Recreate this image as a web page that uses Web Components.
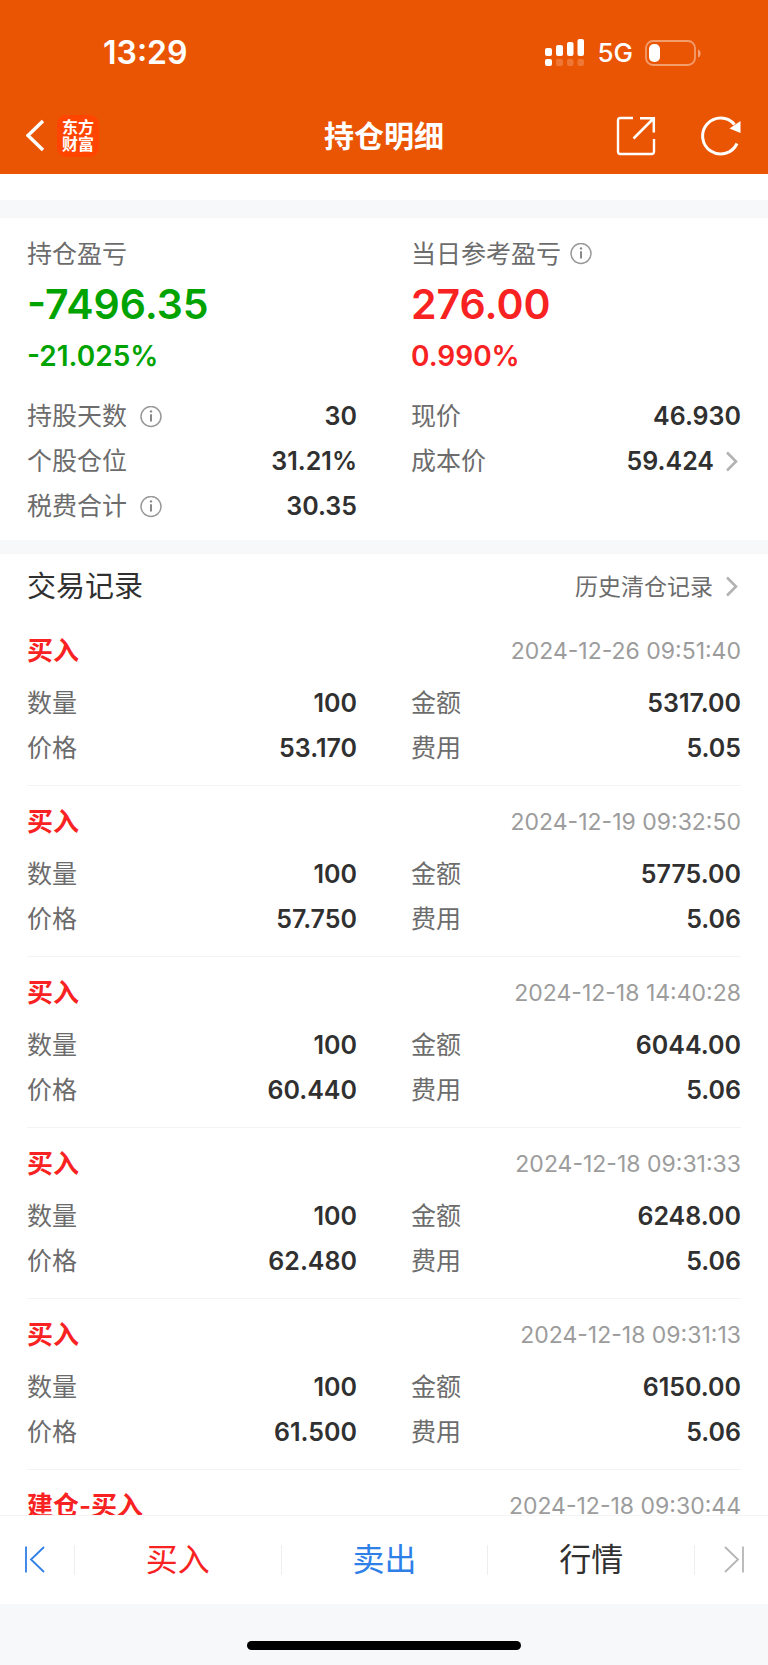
<!DOCTYPE html>
<html lang="zh-CN">
<head>
<meta charset="utf-8">
<meta name="viewport" content="width=device-width, initial-scale=1">
<title>持仓明细</title>
<style>
    :root{
        --brand: #ea5504;
        --red: #f82222;
        --green: #00a300;
        --blue: #2e7fe8;
        --text: #303030;
        --label: #6c6c6c;
        --muted: #9c9c9c;
        --strip: #f7f8fa;
        --line: #f4f4f4;
    }
    body{
        margin: 0;
        background: white;
        color: var(--text);
        font-family: Inter, "Noto Sans CJK SC", sans-serif;
    }
</style>
</head>
<body>
<position-page>
    <status-bar slot="header" time="13:29" network="5G"></status-bar>
    <nav-bar slot="header">持仓明细</nav-bar>

    <page-section gap="wide">
        <two-columns>
            <profit-figure trend="down" amount="-7496.35" percent="-21.025%">持仓盈亏</profit-figure>
            <profit-figure trend="up" amount="276.00" percent="0.990%" info>当日参考盈亏</profit-figure>
        </two-columns>
        <two-columns>
            <value-row value="30" info>持股天数</value-row>
            <value-row value="46.930">现价</value-row>
            <value-row value="31.21%">个股仓位</value-row>
            <value-row value="59.424" href="#cost">成本价</value-row>
            <value-row value="30.35" info>税费合计</value-row>
        </two-columns>
    </page-section>

    <page-section>
        <section-heading link="历史清仓记录" href="#history">交易记录</section-heading>
        <trade-record time="2024-12-26 09:51:40" count="100" amount="5317.00" price="53.170" fee="5.05">买入</trade-record>
        <trade-record time="2024-12-19 09:32:50" count="100" amount="5775.00" price="57.750" fee="5.06">买入</trade-record>
        <trade-record time="2024-12-18 14:40:28" count="100" amount="6044.00" price="60.440" fee="5.06">买入</trade-record>
        <trade-record time="2024-12-18 09:31:33" count="100" amount="6248.00" price="62.480" fee="5.06">买入</trade-record>
        <trade-record time="2024-12-18 09:31:13" count="100" amount="6150.00" price="61.500" fee="5.06">买入</trade-record>
        <trade-record time="2024-12-18 09:30:44">建仓-买入</trade-record>
    </page-section>

    <action-bar slot="footer">
        <button slot="action" class="buy">买入</button>
        <button slot="action" class="sell">卖出</button>
        <button slot="action">行情</button>
    </action-bar>
</position-page>

<script>
const INFO_ICON = `
    <svg class="info" width="22" height="22" viewBox="0 0 22 22" fill="none" aria-hidden="true">
        <circle cx="11" cy="10.500" r="10" stroke="#999" stroke-width="1.500"/>
        <path d="M11 8.200V15.500" stroke="#888" stroke-width="2"/>
        <circle cx="11" cy="5.400" r="1.200" fill="#888"/>
    </svg>
`
const ARROW_ICON = `
    <svg class="arrow" width="16" height="22" viewBox="0 0 16 22" fill="none" aria-hidden="true">
        <path d="M2 1.500L11 10.500L2 19.500" stroke="#b3b3b3" stroke-width="2.600"/>
    </svg>
`

class PositionPage extends HTMLElement{
    constructor(){
        super()
        this.attachShadow({mode: 'open'})
        this.shadowRoot.innerHTML = `
            <style>
                :host{
                    display: flex;
                    flex-direction: column;
                    height: 100vh;
                }
                header{
                    background: var(--brand);
                    color: white;
                }
                main{
                    flex: 1;
                    min-height: 0;
                    padding-top: 26px;
                    overflow-y: auto;
                    scrollbar-width: none;
                }
            </style>
            <header><slot name="header"></slot></header>
            <main><slot></slot></main>
            <slot name="footer"></slot>
        `
    }
}

class StatusBar extends HTMLElement{
    constructor(){
        super()
        this.attachShadow({mode: 'open'})
        this.shadowRoot.innerHTML = `
            <style>
                :host{
                    display: flex;
                    align-items: center;
                    justify-content: space-between;
                    box-sizing: border-box;
                    height: 98px;
                    padding: 7px 67px 0 103px;
                }
                #time{
                    font-size: 32px;
                    font-weight: 600;
                }
                #signals{
                    display: flex;
                    align-items: center;
                    gap: 12px;
                }
                #network{
                    font-size: 26px;
                    font-weight: 500;
                }
            </style>
            <span id="time"></span>
            <div id="signals">
                <svg width="40" height="28" viewBox="0 0 40 28" fill="white" aria-hidden="true">
                    <rect x="0" y="9" width="7" height="8" rx="2"/>
                    <rect x="11" y="6" width="7" height="11" rx="2"/>
                    <rect x="22" y="3" width="6.5" height="14" rx="2"/>
                    <rect x="32.5" y="0" width="6.5" height="17" rx="2"/>
                    <rect x="0" y="20" width="7" height="7" rx="2"/>
                    <g opacity=".2">
                        <rect x="11" y="20" width="7" height="7" rx="2"/>
                        <rect x="22" y="20" width="6.5" height="7" rx="2"/>
                        <rect x="32.5" y="20" width="6.5" height="7" rx="2"/>
                    </g>
                </svg>
                <span id="network"></span>
                <svg width="56" height="28" viewBox="0 0 56 28" fill="none" aria-hidden="true">
                    <rect x="1" y="2" width="49" height="24" rx="7" stroke="white" stroke-opacity=".42" stroke-width="1.8"/>
                    <path d="M53 10.5C56.5 11.5 56.5 17.5 53 18.5Z" fill="white" fill-opacity=".45"/>
                    <rect x="4" y="5" width="11" height="18" rx="5" fill="white"/>
                </svg>
            </div>
        `
    }
    connectedCallback(){
        this.shadowRoot.querySelector('#time').textContent    = this.getAttribute('time')
        this.shadowRoot.querySelector('#network').textContent = this.getAttribute('network')
    }
}

class NavBar extends HTMLElement{
    constructor(){
        super()
        this.attachShadow({mode: 'open'})
        this.shadowRoot.innerHTML = `
            <style>
                :host{
                    display: grid;
                    grid-template-columns: 1fr auto 1fr;
                    align-items: center;
                    height: 76px;
                    padding: 0 26px;
                }
                div{
                    display: flex;
                    align-items: center;
                    gap: 12px;
                }
                #tools{
                    justify-content: flex-end;
                    gap: 44px;
                }
                button{
                    display: flex;
                    padding: 0;
                    border: 0;
                    background: none;
                }
                #logo{
                    width: 42px;
                    box-sizing: border-box;
                    padding: 4px 5px;
                    border-radius: 9px;
                    background: #ff4500;
                    font-size: 16px;
                    font-weight: bold;
                    line-height: 17px;
                    text-align: center;
                }
                h1{
                    margin: 0;
                    font-size: 30px;
                    font-weight: 600;
                    line-height: 40px;
                }
            </style>
            <div>
                <button aria-label="返回">
                    <svg width="19" height="34" viewBox="0 0 19 34" fill="none">
                        <path d="M17 2L2 16.500L17 31" stroke="white" stroke-width="3.400"/>
                    </svg>
                </button>
                <span id="logo">东方<br>财富</span>
            </div>
            <h1><slot></slot></h1>
            <div id="tools">
                <button aria-label="分享">
                    <svg width="40" height="40" viewBox="0 0 40 40" fill="none">
                        <path d="M17 2H4.500Q2 2 2 4.500V35.500Q2 38 4.500 38H35.500Q38 38 38 35.500V23" stroke="white" stroke-width="2.400"/>
                        <path d="M24 2.200H37.800V16.500M37.500 2.500L17.500 22.500" stroke="white" stroke-width="2.500"/>
                    </svg>
                </button>
                <button aria-label="刷新">
                    <svg width="42" height="40" viewBox="0 0 42 40" fill="none">
                        <path d="M34.500 8.500A18 18 0 1 0 37 27.500" stroke="white" stroke-width="3"/>
                        <path d="M40.500 5V17L29.500 12.500Z" fill="white"/>
                    </svg>
                </button>
            </div>
        `
    }
}

class PageSection extends HTMLElement{
    constructor(){
        super()
        this.attachShadow({mode: 'open'})
        this.shadowRoot.innerHTML = `
            <style>
                :host{
                    display: block;
                    padding: 13px 27px 0;
                    border-top: 14px solid var(--strip);
                }
                :host([gap="wide"]){
                    padding: 16px 27px 11px;
                    border-top-width: 18px;
                }
            </style>
            <slot></slot>
        `
    }
}

class TwoColumns extends HTMLElement{
    constructor(){
        super()
        this.attachShadow({mode: 'open'})
        this.shadowRoot.innerHTML = `
            <style>
                :host{
                    display: grid;
                    grid-template-columns: 1fr 1fr;
                    column-gap: 54px;
                }
            </style>
            <slot></slot>
        `
    }
}

class ProfitFigure extends HTMLElement{
    constructor(){
        super()
        this.attachShadow({mode: 'open'})
        this.shadowRoot.innerHTML = `
            <style>
                :host{
                    display: block;
                    padding-bottom: 16px;
                    color: var(--red);
                    font-weight: 600;
                }
                :host([trend="down"]){
                    color: var(--green);
                }
                #label{
                    display: flex;
                    align-items: center;
                    gap: 9px;
                    color: var(--label);
                    font-size: 25px;
                    font-weight: 400;
                    line-height: 40px;
                }
                #amount{
                    font-size: 41px;
                    line-height: 60px;
                }
                #percent{
                    font-size: 28px;
                    line-height: 44px;
                }
            </style>
            <div id="label"><slot></slot></div>
            <div id="amount"></div>
            <div id="percent"></div>
        `
    }
    connectedCallback(){
        this.shadowRoot.querySelector('#amount').textContent  = this.getAttribute('amount')
        this.shadowRoot.querySelector('#percent').textContent = this.getAttribute('percent')
        if(this.hasAttribute('info')){
            this.shadowRoot.querySelector('#label').insertAdjacentHTML('beforeend', INFO_ICON)
        }
    }
}

class ValueRow extends HTMLElement{
    constructor(){
        super()
        this.attachShadow({mode: 'open'})
        this.shadowRoot.innerHTML = `
            <style>
                :host{
                    display: flex;
                    justify-content: space-between;
                    font-size: 25px;
                    line-height: 45px;
                }
                #label{
                    display: flex;
                    align-items: center;
                    gap: 13px;
                    color: var(--label);
                }
                #value, a{
                    display: flex;
                    align-items: center;
                    gap: 11px;
                    color: var(--text);
                    font-weight: 600;
                    text-decoration: none;
                }
            </style>
            <span id="label"><slot></slot></span>
            <span id="value"></span>
        `
    }
    connectedCallback(){
        const valueEl = this.shadowRoot.querySelector('#value')
        valueEl.textContent = this.getAttribute('value')
        if(this.hasAttribute('info')){
            this.shadowRoot.querySelector('#label').insertAdjacentHTML('beforeend', INFO_ICON)
        }
        if(this.hasAttribute('href')){
            valueEl.innerHTML = `<a href="${this.getAttribute('href')}">${this.getAttribute('value')}${ARROW_ICON}</a>`
        }
    }
}

class SectionHeading extends HTMLElement{
    constructor(){
        super()
        this.attachShadow({mode: 'open'})
        this.shadowRoot.innerHTML = `
            <style>
                :host{
                    display: flex;
                    align-items: center;
                    justify-content: space-between;
                    margin-bottom: 8px;
                }
                h2{
                    margin: 0;
                    font-size: 29px;
                    font-weight: 400;
                    line-height: 40px;
                }
                a{
                    display: flex;
                    align-items: center;
                    gap: 12px;
                    color: var(--label);
                    font-size: 23px;
                    line-height: 40px;
                    text-decoration: none;
                }
            </style>
            <h2><slot></slot></h2>
            <a><span></span>${ARROW_ICON}</a>
        `
    }
    connectedCallback(){
        this.shadowRoot.querySelector('a').href           = this.getAttribute('href')
        this.shadowRoot.querySelector('span').textContent = this.getAttribute('link')
    }
}

class TradeRecord extends HTMLElement{
    constructor(){
        super()
        this.attachShadow({mode: 'open'})
        this.shadowRoot.innerHTML = `
            <style>
                :host{
                    display: block;
                    padding: 16px 0 14px;
                    border-bottom: 1px solid var(--line);
                }
                #head{
                    display: flex;
                    align-items: center;
                    justify-content: space-between;
                    margin-bottom: 10px;
                    line-height: 40px;
                }
                h3{
                    margin: 0;
                    color: var(--red);
                    font-size: 26px;
                    font-weight: 600;
                }
                time{
                    color: var(--muted);
                    font-size: 23px;
                }
            </style>
            <div id="head">
                <h3><slot></slot></h3>
                <time></time>
            </div>
            <two-columns></two-columns>
        `
    }
    connectedCallback(){
        const fields = [['count', '数量'], ['amount', '金额'], ['price', '价格'], ['fee', '费用']]
        this.shadowRoot.querySelector('time').textContent = this.getAttribute('time')
        this.shadowRoot.querySelector('two-columns').innerHTML = fields
            .filter(([name]) => this.hasAttribute(name))
            .map(([name, label]) => `<value-row value="${this.getAttribute(name)}">${label}</value-row>`)
            .join('')
    }
}

class ActionBar extends HTMLElement{
    constructor(){
        super()
        this.attachShadow({mode: 'open'})
        this.shadowRoot.innerHTML = `
            <style>
                :host{
                    display: block;
                    background: var(--strip);
                }
                nav{
                    display: grid;
                    grid-template-columns: 74px 1fr 1fr 1fr 74px;
                    align-items: center;
                    height: 88px;
                    border-top: 1px solid var(--line);
                    background: white;
                }
                button, ::slotted(button){
                    display: flex;
                    align-items: center;
                    justify-content: center;
                    height: 30px;
                    padding: 0;
                    border: 0;
                    background: none;
                    color: var(--text);
                    font-family: inherit;
                    font-size: 32px;
                    line-height: 30px;
                }
                ::slotted(button){
                    border-left: 1px solid #eee;
                }
                ::slotted(.buy){
                    color: var(--red);
                }
                ::slotted(.sell){
                    color: var(--blue);
                }
                #prev{
                    padding-right: 4px;
                }
                #next{
                    padding-left: 4px;
                    border-left: 1px solid #eee;
                }
                #home{
                    display: flex;
                    justify-content: center;
                    padding: 37px 0 15px;
                }
                #home::before{
                    content: '';
                    width: 274px;
                    height: 9px;
                    border-radius: 5px;
                    background: black;
                }
            </style>
            <nav>
                <button id="prev" aria-label="上一只">
                    <svg width="24" height="30" viewBox="0 0 24 30" fill="none" stroke="var(--blue)" stroke-width="1.800">
                        <path d="M3 1.500V27.500M21 2L8 14.500L21 27"/>
                    </svg>
                </button>
                <slot name="action"></slot>
                <button id="next" aria-label="下一只">
                    <svg width="24" height="30" viewBox="0 0 24 30" fill="none" stroke="#b5b5b5" stroke-width="1.800">
                        <path d="M21 1.500V27.500M3 2L16 14.500L3 27"/>
                    </svg>
                </button>
            </nav>
            <div id="home"></div>
        `
    }
}

customElements.define('position-page', PositionPage)
customElements.define('status-bar', StatusBar)
customElements.define('nav-bar', NavBar)
customElements.define('page-section', PageSection)
customElements.define('two-columns', TwoColumns)
customElements.define('profit-figure', ProfitFigure)
customElements.define('value-row', ValueRow)
customElements.define('section-heading', SectionHeading)
customElements.define('trade-record', TradeRecord)
customElements.define('action-bar', ActionBar)
</script>
</body>
</html>
